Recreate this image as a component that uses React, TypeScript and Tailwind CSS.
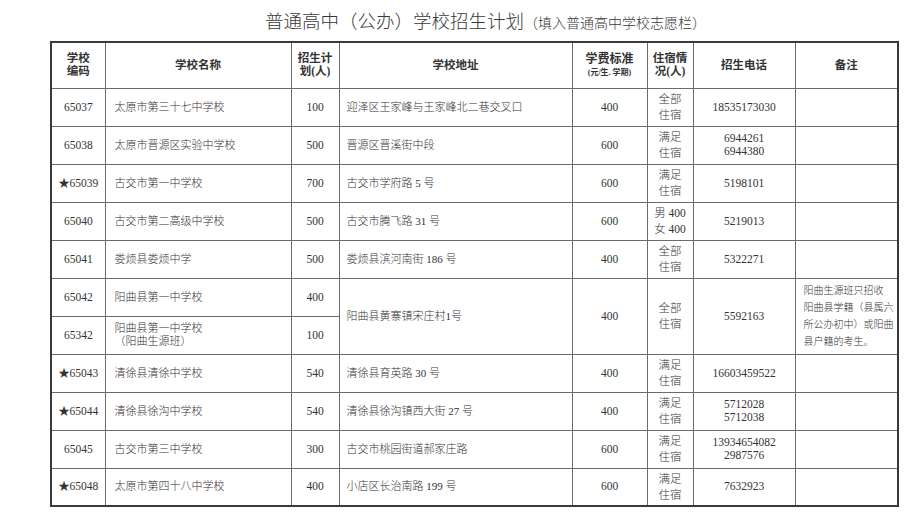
const rows = [
  { code: "65037", name: ["太原市第三十七中学校"], plan: "100", addr: "迎泽区王家峰与王家峰北二巷交叉口", fee: "400", stay: ["全部", "住宿"], tel: ["18535173030"] },
  { code: "65038", name: ["太原市晋源区实验中学校"], plan: "500", addr: "晋源区晋溪街中段", fee: "600", stay: ["满足", "住宿"], tel: ["6944261", "6944380"] },
  { code: "★65039", name: ["古交市第一中学校"], plan: "700", addr: "古交市学府路 5 号", fee: "600", stay: ["满足", "住宿"], tel: ["5198101"] },
  { code: "65040", name: ["古交市第二高级中学校"], plan: "500", addr: "古交市腾飞路 31 号", fee: "600", stay: ["男 400", "女 400"], tel: ["5219013"] },
  { code: "65041", name: ["娄烦县娄烦中学"], plan: "500", addr: "娄烦县滨河南街 186 号", fee: "400", stay: ["全部", "住宿"], tel: ["5322271"] },
];

const rowsAfter = [
  { code: "★65043", name: ["清徐县清徐中学校"], plan: "540", addr: "清徐县育英路 30 号", fee: "400", stay: ["满足", "住宿"], tel: ["16603459522"] },
  { code: "★65044", name: ["清徐县徐沟中学校"], plan: "540", addr: "清徐县徐沟镇西大街 27 号", fee: "400", stay: ["满足", "住宿"], tel: ["5712028", "5712038"] },
  { code: "65045", name: ["古交市第三中学校"], plan: "300", addr: "古交市桃园街道郝家庄路", fee: "600", stay: ["满足", "住宿"], tel: ["13934654082", "2987576"] },
  { code: "★65048", name: ["太原市第四十八中学校"], plan: "400", addr: "小店区长治南路 199 号", fee: "600", stay: ["满足", "住宿"], tel: ["7632923"] },
];

type Row = (typeof rows)[number];

const td = "border border-[#6b6b6b] h-[38px] p-0 align-middle font-light";
const th = "border border-[#6b6b6b] p-0 align-middle font-bold";

function Lines({ items, className }: { items: string[]; className?: string }) {
  return (
    <div className={className}>
      {items.map((s) => (
        <div key={s}>{s}</div>
      ))}
    </div>
  );
}

function BodyRow({ r }: { r: Row }) {
  return (
    <tr>
      <td className={`${td} text-center text-[11.5px]`}>{r.code}</td>
      <td className={`${td} pl-[9px]`}>
        <Lines items={r.name} />
      </td>
      <td className={`${td} text-center text-[11.5px]`}>{r.plan}</td>
      <td className={`${td} pl-[7px]`}>{r.addr}</td>
      <td className={`${td} text-center text-[11.5px]`}>{r.fee}</td>
      <td className={`${td} text-center`}>
        <Lines items={r.stay} className="leading-[16px] text-[11.5px]" />
      </td>
      <td className={`${td} text-center text-[11.5px]`}>
        <Lines items={r.tel} className="leading-[13px]" />
      </td>
      <td className={td}></td>
    </tr>
  );
}

export default function App() {
  return (
    <div className="w-[917px] h-[521px] bg-white text-[#333] font-['Liberation_Serif','Noto_Sans_CJK_SC',serif] overflow-hidden">
      <div className="pt-[12px] pl-[265px] flex items-end h-[41px] pb-[8px] font-light text-[#383838]">
        <span className="text-[18.5px] leading-[22px]">普通高中（公办）学校招生计划</span>
        <span className="text-[14px] leading-[18px]">（填入普通高中学校志愿栏）</span>
      </div>
      <table className="ml-[50px] w-[847px] table-fixed border-collapse border-2 border-[#3a3a3a] text-[11px] leading-[13px]">
        <colgroup>
          <col className="w-[54px]" />
          <col className="w-[186px]" />
          <col className="w-[48px]" />
          <col className="w-[233px]" />
          <col className="w-[75px]" />
          <col className="w-[46px]" />
          <col className="w-[102px]" />
          <col className="w-[103px]" />
        </colgroup>
        <thead>
          <tr className="text-[11.5px]">
            <th className={`${th} h-[46px]`}>
              <div>学校</div>
              <div>编码</div>
            </th>
            <th className={th}>学校名称</th>
            <th className={th}>
              <div>招生计</div>
              <div>划(人)</div>
            </th>
            <th className={th}>学校地址</th>
            <th className={th}>
              <div className="text-[12px] leading-[15px]">学费标准</div>
              <div className="text-[8px] leading-[11px]">(元/生. 学期)</div>
            </th>
            <th className={th}>
              <div>住宿情</div>
              <div>况(人)</div>
            </th>
            <th className={th}>招生电话</th>
            <th className={th}>备注</th>
          </tr>
        </thead>
        <tbody>
          {rows.map((r) => (
            <BodyRow key={r.code} r={r} />
          ))}
          <tr>
            <td className={`${td} text-center text-[11.5px]`}>65042</td>
            <td className={`${td} pl-[9px]`}>阳曲县第一中学校</td>
            <td className={`${td} text-center text-[11.5px]`}>400</td>
            <td className={`${td} pl-[7px]`} rowSpan={2}>
              阳曲县黄寨镇宋庄村1号
            </td>
            <td className={`${td} text-center text-[11.5px]`} rowSpan={2}>
              400
            </td>
            <td className={`${td} text-center`} rowSpan={2}>
              <Lines items={["全部", "住宿"]} className="leading-[16px] text-[11.5px]" />
            </td>
            <td className={`${td} text-center text-[11.5px]`} rowSpan={2}>
              5592163
            </td>
            <td className={`${td} pl-[8px] text-[10px] leading-[17px]`} rowSpan={2}>
              <div>阳曲生源班只招收</div>
              <div>阳曲县学籍（县属六</div>
              <div>所公办初中）或阳曲</div>
              <div>县户籍的考生。</div>
            </td>
          </tr>
          <tr>
            <td className={`${td} text-center text-[11.5px]`}>65342</td>
            <td className={`${td} pl-[9px]`}>
              <Lines items={["阳曲县第一中学校", "（阳曲生源班）"]} />
            </td>
            <td className={`${td} text-center text-[11.5px]`}>100</td>
          </tr>
          {rowsAfter.map((r) => (
            <BodyRow key={r.code} r={r} />
          ))}
        </tbody>
      </table>
    </div>
  );
}
